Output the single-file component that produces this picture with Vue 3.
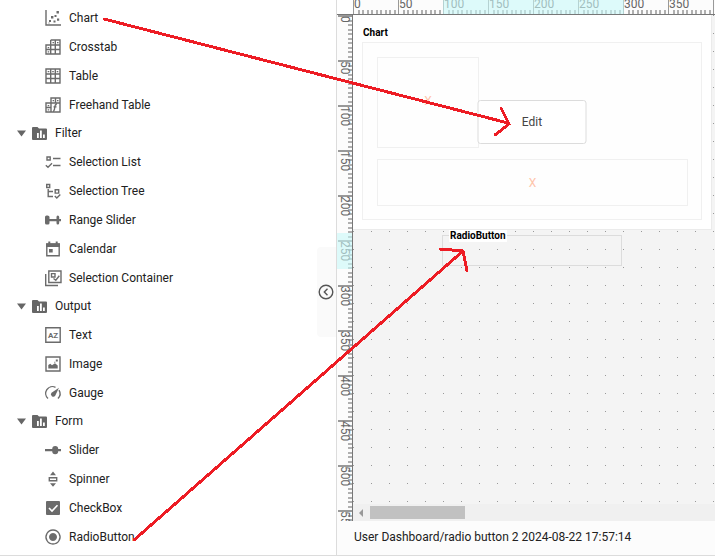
<script setup>
import { ref } from 'vue'

const grid = 'M1 1h14v14H1zM1 6h14M1 10.5h14M5.7 1v14M10.3 1v14'
const icons = {
  chart: { line: 'M1 0V15H16', fill: 'M4 10h2v2H4zM6 6h2.4v2.4H6zM8.500 10.500h2v2h-2zM9.500 5h2v2h-2zM11.500 1h2.400v2.400h-2.400zM12 8.500h2.200v2.200H12zM3.500 12.500h1v1h-1z' },
  crosstab: { line: 'M5.700 1H15v14H1V6h14M1 10.500h14M5.700 1v14M10.300 1v14', fill: 'M7.500 3h1.500v1.300H7.500zM12 3h1.500v1.300H12zM2.700 8h1.500v1.300H2.700zM2.700 12.300h1.500v1.300H2.700z' },
  table: { line: grid, fill: 'M2.700 3h1.600v1.300H2.700zM7.200 3h1.600v1.300H7.200zM11.700 3h1.600v1.300h-1.600z' },
  freehand: { line: 'M6 1h9v14H1V6h5zM6 6h9M6 6v9M1 10.500h5M10.500 1v5M11.800 7.500h-.6q-1 0-1.200 1.500l-.6 3.500q-.2 1.200-1.200 1M8.500 9.900h3', fill: 'M7.600 3h1.500v1.300H7.600zM12 3h1.500v1.300H12zM2.700 8h1.500v1.300H2.700zM2.700 12.300h1.500v1.300H2.700z' },
  list: { line: 'M2 3h3.200v3H2zM8 4.500h7.500M8 11.500h7.500M.8 11.300l2.200 2 4-4' },
  tree: { line: 'M1.700 1.500h3v3h-3zM3.200 6v7.500H8M3.200 8.500H8M10.200 6.800h3.500v3.300h-3.500zM9.800 13l2 2 3.500-3.500' },
  range: { fill: 'M0 5q0-1.500 1.500-1.500h1Q4.500 3.500 4.500 5v2h7V5q0-1.500 1.300-1.500T14.200 5v2H16v2.200h-1.800V11q0 1.500-1.400 1.500T11.500 11V9.200h-7V11q0 1.500-1.500 1.500H1.500Q0 12.500 0 11z' },
  calendar: { line: 'M1.800 3h12.400v11.700H1.800z', fill: 'M1 2.500h14V6H1zM3.300.5h2V3h-2zM10.700.5h2V3h-2zM4 8h3.700v3.500H4z' },
  container: { line: 'M3.800 1H16v11.500H3.800zM.7 4v11.500H13M6.500 3.600h3.500v3.400H6.500zM8.500 8.500l2.300 1.800 3.500-4.500' },
  text: { line: 'M.8.8h14.400v14.400H.8z', text: 'AZ' },
  image: { line: 'M1 1h14v14H1z', fill: 'M3.300 12.500V9l2-1.200 1.700 1.500 3-2 2.700 2.200v3zM10.800 3.500h2v2h-2zM9.300 5.800h1v1h-1z' },
  gauge: { line: 'M3 13.500A6.800 6.800 0 0 1 10.500 2.300M14 5.200A6.800 6.800 0 0 1 13 13.500', fill: 'M14 2.800 10.200 10.800A2.300 2.300 0 1 1 6.500 7.800Z' },
  slider: { fill: 'M0 7h7.200a3 3 0 0 1 6 0H16v2.200h-2.800a3 3 0 0 1-6 0H0z' },
  spinner: { line: 'M4.300 6.700h7.400v3H4.300z', fill: 'M8 .5l3 3.700H5zM8 15.700l3-3.500H5z' },
  checkbox: { fill: 'M2 1h12q1 0 1 1v12q0 1-1 1H2q-1 0-1-1V2q0-1 1-1z', tick: 'M4 8l3 3 5.500-5.800' },
  radio: { line: 'M8 1a7 7 0 1 0 .01 0z', fill: 'M8 4a4 4 0 1 0 .01 0z' }
}

const groups = ref([
  { name: '', open: true, items: [['chart', 'Chart'], ['crosstab', 'Crosstab'], ['table', 'Table'], ['freehand', 'Freehand Table']] },
  { name: 'Filter', open: true, items: [['list', 'Selection List'], ['tree', 'Selection Tree'], ['range', 'Range Slider'], ['calendar', 'Calendar'], ['container', 'Selection Container']] },
  { name: 'Output', open: true, items: [['text', 'Text'], ['image', 'Image'], ['gauge', 'Gauge']] },
  { name: 'Form', open: true, items: [['slider', 'Slider'], ['spinner', 'Spinner'], ['checkbox', 'CheckBox'], ['radio', 'RadioButton']] }
])

// Ruler ticks: one every 5 units, labelled every 50 units, at 0.9 px per unit.
function makeTicks(length) {
  return Array.from({ length: length / 5 + 1 }, (_, i) => ({
    at: Math.round(i * 4.5),
    major: i % 10 === 0,
    label: i * 5
  }))
}
const across = makeTicks(400)
const down = makeTicks(560)
const acrossLabels = across.filter((t) => t.major && t.label < 400)
const downLabels = down.filter((t) => t.major)
</script>

<template>
  <div class="app">
    <aside class="sidebar">
      <ul class="tree">
        <li v-for="g in groups" :key="g.name">
          <button v-if="g.name" type="button" class="group" :aria-expanded="g.open" @click="g.open = !g.open">
            <svg class="caret" viewBox="0 0 9 7"><path d="M0 .5h9L4.500 6.500z" /></svg>
            <svg class="folder" viewBox="0 0 15 13">
              <path d="M1 0h4.500L7 1.500h7q1 0 1 1V12q0 1-1 1H1q-1 0-1-1V1q0-1 1-1z" />
              <path class="bars" d="M5 6h1.800v5H5zM8 3.500h1.800V11H8zM11 7.500h1.800V11H11z" />
            </svg>
            <span>{{ g.name }}</span>
          </button>
          <ul v-show="g.open" class="items">
            <li v-for="[icon, label] in g.items" :key="label" class="item" draggable="true">
              <svg class="icon" viewBox="0 0 16 16">
                <path v-if="icons[icon].line" class="line" :d="icons[icon].line" />
                <path v-if="icons[icon].fill" :d="icons[icon].fill" />
                <path v-if="icons[icon].tick" class="tick" :d="icons[icon].tick" />
                <text v-if="icons[icon].text" x="8" y="11" text-anchor="middle">{{ icons[icon].text }}</text>
              </svg>
              <span>{{ label }}</span>
            </li>
          </ul>
        </li>
      </ul>
      <button type="button" class="collapse" aria-label="Collapse panel">
        <svg viewBox="0 0 16 16"><circle cx="8" cy="8" r="6.800" /><path d="M9.500 4.800 6.300 8l3.200 3.200" /></svg>
      </button>
    </aside>

    <main class="editor">
      <div class="corner"></div>
      <div class="ruler top">
        <svg width="100%" height="14">
          <rect v-for="t in across" :key="t.at" :x="t.at" :y="t.major ? 0 : 10" :width="t.major ? 1 : 2" height="14" :class="{ major: t.major }" />
          <text v-for="t in acrossLabels" :key="t.label" :x="t.at + 1" y="8">{{ t.label }}</text>
          <rect class="range" x="90" y="0" width="181" height="14" />
        </svg>
      </div>
      <div class="ruler left">
        <svg width="15" height="100%">
          <rect v-for="t in down" :key="t.at" :x="t.major ? 1 : 11" :y="t.at" width="14" height="2" :class="{ major: t.major }" />
          <text v-for="t in downLabels" :key="t.label" :transform="`translate(4 ${t.at + 1}) rotate(90)`">{{ t.label }}</text>
          <rect class="range" x="0" y="218" width="15" height="36" />
        </svg>
      </div>
      <div class="canvas">
        <svg class="dots" width="100%" height="100%">
          <defs>
            <pattern id="dot" width="18" height="18" patternUnits="userSpaceOnUse">
              <rect width="1" height="1" />
            </pattern>
          </defs>
          <rect width="100%" height="100%" fill="url(#dot)" />
        </svg>
        <section class="chart">
          <h2>Chart</h2>
          <div class="plot">
            <div class="slot side">X</div>
            <div class="slot wide">X</div>
          </div>
          <button type="button" class="edit">Edit</button>
        </section>
        <div class="radio-box"><span>RadioButton</span></div>
      </div>
      <div class="scrollbar">
        <svg viewBox="0 0 4 8"><path d="M4 0v8L0 4z" /></svg>
        <div class="thumb"></div>
      </div>
      <footer class="status">User Dashboard/radio button 2 2024-08-22 17:57:14</footer>
    </main>

    <svg class="arrows" width="715" height="556" viewBox="0 0 715 556">
      <path d="M104 19 508 123M501 108 509 124 495 135M134 540 463 251M440 249 463 251 467 271" />
    </svg>
  </div>
</template>

<style>
body { margin: 0; }
</style>

<style scoped>
.app {
  position: relative;
  display: grid;
  grid-template-columns: 337px minmax(0, 1fr);
  min-height: 100vh;
  box-sizing: border-box;
  overflow: hidden;
  border-bottom: 1px solid #dcdcdc;
  background: #fff;
  color: #212121;
  font: 12px/16px Roboto, sans-serif;
}
button { font: inherit; color: inherit; cursor: pointer; }
.sidebar {
  display: flex;
  justify-content: space-between;
  border-right: 1px solid #dcdcdc;
}
ul { margin: 0; padding: 0; list-style: none; }
.tree { padding-top: 3px; }
.group {
  display: flex;
  align-items: center;
  height: 28px;
  padding: 0 0 0 17px;
  border: 0;
  background: none;
}
.caret { width: 9px; height: 7px; margin-right: 6px; fill: #666; }
.folder { width: 15px; height: 13px; margin-right: 8px; fill: #666; }
.bars { fill: #fff; }
.group[aria-expanded='false'] .caret { transform: rotate(-90deg); }
.item {
  display: flex;
  align-items: center;
  gap: 8px;
  height: 29px;
  padding-left: 45px;
}
.icon { width: 16px; height: 16px; fill: #6b6b6b; overflow: visible; }
.line { fill: none; stroke: #6b6b6b; stroke-width: 1.4; }
.tick { fill: none; stroke: #fff; stroke-width: 1.6; }
.icon text { font: bold 8px Roboto, sans-serif; }
.collapse {
  display: flex;
  align-items: center;
  align-self: center;
  width: 19px;
  height: 90px;
  margin-top: 28px;
  padding: 0 1px;
  border: 0;
  border-radius: 4px 0 0 4px;
  background: #fafafa;
}
.collapse svg { width: 16px; height: 16px; fill: none; stroke: #555; stroke-width: 1.4; }

.editor {
  display: grid;
  grid-template-columns: 16px minmax(0, 1fr);
  grid-template-rows: 15px minmax(240px, 1fr) 17px 34px;
}
.corner, .ruler.top { border-bottom: 1px solid #777; }
.ruler { overflow: hidden; background: #fcfcfc; }
.ruler.left { position: relative; grid-row: 2 / 4; border-right: 1px solid #777; }
.ruler.left svg { position: absolute; top: 0; left: 0; }
.ruler svg { display: block; fill: #b0b0b0; }
.ruler .major { fill: #999; }
.ruler text { fill: #666; font: 12px Roboto, sans-serif; }
.ruler .range { fill: rgba(200, 248, 248, 0.6); }

.canvas {
  position: relative;
  overflow: hidden;
  background: #f4f4f4;
}
.dots { display: block; position: absolute; inset: 0; fill: #999; }
.chart {
  position: absolute;
  top: 0;
  left: 0;
  width: 358px;
  padding-bottom: 9px;
  border: solid #ebebeb;
  border-width: 0 1px 1px 0;
  background: #fff;
}
.chart h2 {
  margin: 0;
  padding: 10px 10px 1px;
  color: #000;
  font: bold 10px/16px Roboto, sans-serif;
}
.plot {
  display: grid;
  gap: 11px;
  margin: 0 9px;
  padding: 14px 13px 13px 14px;
  border: 1px solid #f0f0f0;
  background: #fefefe;
}
.slot {
  display: flex;
  align-items: center;
  justify-content: center;
  box-sizing: border-box;
  border: 1px solid #f0f0f0;
  color: #ffc4ab;
}
.side { width: 102px; height: 91px; padding-bottom: 4px; }
.wide { height: 47px; }
.edit {
  position: absolute;
  top: 50%;
  left: 50%;
  width: 109px;
  height: 44px;
  transform: translate(-50%, -50%);
  border: 1px solid #dcdcdc;
  border-radius: 3px;
  background: #fff;
  color: #444;
}
.radio-box {
  position: absolute;
  top: 220px;
  left: 89px;
  width: 178px;
  height: 29px;
  border: 1px solid #dcdcdc;
}
.radio-box span {
  position: absolute;
  top: -6px;
  left: 6px;
  padding: 0 1px;
  background: #fff;
  color: #000;
  font: bold 10px/12px Roboto, sans-serif;
}
.scrollbar {
  display: flex;
  align-items: center;
  gap: 7px;
  padding-left: 6px;
  background: #f0f0f0;
}
.scrollbar svg { width: 4px; height: 8px; fill: #999; }
.thumb { width: 95px; height: 13px; background: #c1c1c1; }
.status {
  grid-column: 1 / -1;
  padding: 8px 17px;
  background: #fcfcfc;
}
.arrows { position: absolute; top: 0; left: 0; pointer-events: none; }
.arrows path { fill: none; stroke: #ed1c24; stroke-width: 3; stroke-linecap: round; shape-rendering: crispEdges; }
</style>
